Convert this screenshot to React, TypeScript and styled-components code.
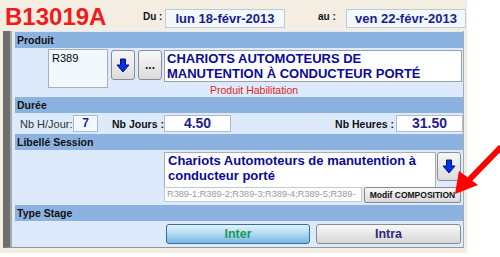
import React from "react";
import styled, { createGlobalStyle } from "styled-components";

const GlobalStyle = createGlobalStyle`
  body {
    margin: 0;
    background: #ffffff;
    font-family: "Liberation Sans", Arial, sans-serif;
  }
`;

const Wrapper = styled.div`
  position: relative;
  width: 500px;
  height: 257px;
`;
const Screen = styled.div`
  width: 467px;
  height: 253px;
  background: #f4eee2;
`;
const Header = styled.header`
  display: flex;
  align-items: flex-start;
  height: 31px;
  padding-left: 5px;
  box-sizing: border-box;
`;
const Code = styled.h1`
  margin: 5px 0 0 0;
  width: 138px;
  font-size: 24px;
  line-height: 24px;
  font-weight: bold;
  color: #f01c1c;
`;
const DateLabel = styled.span<{ $width: number }>`
  width: ${(p) => p.$width}px;
  margin-top: 11px;
  font-size: 10px;
  line-height: 12px;
  font-weight: bold;
  color: #101010;
`;
const DateBox = styled.div<{ $gap?: number }>`
  width: 120px;
  height: 19px;
  margin-top: 9px;
  margin-right: ${(p) => p.$gap || 0}px;
  box-sizing: border-box;
  border: 1px solid #c2c9d0;
  background: #f1f9ff;
  color: #1c1c8a;
  font-size: 13px;
  font-weight: bold;
  line-height: 17px;
  text-align: center;
`;
const Panel = styled.section`
  margin-left: 3px;
  width: 461px;
  height: 217px;
  box-sizing: border-box;
  padding: 1px 0 0 5px;
  background: #dceafb;
  border-left: 7px solid #6f6f6f;
  border-right: 1px solid #a4abb3;
  border-bottom: 1px solid #8f969e;
  box-shadow: inset 2px 0 0 #a9a9a9;
`;
const Bar = styled.div`
  height: 16px;
  padding-left: 2px;
  background: #8cb3e0;
  color: #111111;
  font-size: 10.5px;
  font-weight: bold;
  line-height: 16px;
`;
const ProduitRow = styled.div`
  display: flex;
  align-items: flex-start;
  height: 49px;
  padding: 1px 0 0 33px;
  box-sizing: border-box;
`;
const CodeInput = styled.div`
  width: 60px;
  height: 39px;
  margin-right: 3px;
  box-sizing: border-box;
  border: 1px solid #a8aeb4;
  background: #f1f9ff;
  padding: 2px 3px;
  font-size: 11px;
  color: #000000;
`;
const ToolButton = styled.button<{ $height: number; $gap: number }>`
  display: flex;
  align-items: center;
  justify-content: center;
  width: 24px;
  height: ${(p) => p.$height}px;
  margin: 1px ${(p) => p.$gap}px 0 0;
  padding: 0;
  box-sizing: border-box;
  border: 1px solid #8d8d8d;
  border-radius: 3px;
  background: linear-gradient(#f7f7f7, #dcdcdc);
  font-family: "Liberation Sans", Arial, sans-serif;
  font-size: 12px;
  font-weight: bold;
  color: #222222;
`;
const ProductColumn = styled.div`
  display: flex;
  flex-direction: column;
  margin-top: 1px;
`;
const ProductName = styled.div`
  width: 298px;
  height: 32px;
  box-sizing: border-box;
  border: 1px solid #9aa1a8;
  background: #ffffff;
  padding: 0 2px;
  color: #0a0a96;
  font-size: 13px;
  font-weight: bold;
  line-height: 15px;
`;
const Caption = styled.div`
  margin-top: 3px;
  padding-left: 46px;
  color: #e52424;
  font-size: 10.5px;
  line-height: 10px;
`;
const DureeRow = styled.div`
  display: flex;
  align-items: center;
  height: 21px;
  padding-left: 5px;
`;
const FieldLabel = styled.span<{ $bold?: boolean; $width?: number }>`
  width: ${(p) => (p.$width ? `${p.$width}px` : "auto")};
  color: ${(p) => (p.$bold ? "#111111" : "#333333")};
  font-size: ${(p) => (p.$bold ? 10.5 : 11)}px;
  font-weight: ${(p) => (p.$bold ? "bold" : "normal")};
`;
const NumberBox = styled.div<{ $width: number; $light?: boolean }>`
  width: ${(p) => p.$width}px;
  height: 17px;
  box-sizing: border-box;
  border: 1px solid #b4bac0;
  background: ${(p) => (p.$light ? "#f1f9ff" : "#ffffff")};
  color: #1e1e8c;
  font-size: ${(p) => (p.$light ? 12 : 14)}px;
  font-weight: bold;
  line-height: 15px;
  text-align: center;
`;
const Spacer = styled.div`
  flex: 1;
`;
const LibelleRow = styled.div`
  display: flex;
  align-items: flex-start;
  height: 55px;
  padding: 2px 0 0 149px;
  box-sizing: border-box;
`;
const LibelleColumn = styled.div`
  display: flex;
  flex-direction: column;
  width: 272px;
`;
const LibelleText = styled.div`
  height: 35px;
  box-sizing: border-box;
  border: 1px solid #a8aeb4;
  border-bottom: none;
  background: #ffffff;
  padding: 0 3px;
  color: #0a0a96;
  font-size: 13px;
  font-weight: bold;
  line-height: 15px;
`;
const CompoRow = styled.div`
  display: flex;
  align-items: flex-start;
  width: 300px;
`;
const CompoField = styled.div`
  width: 198px;
  height: 15px;
  box-sizing: border-box;
  border: 1px solid #c4c9ce;
  background: #ffffff;
  padding-left: 2px;
  color: #9a9a9a;
  font-size: 9.2px;
  line-height: 13px;
  white-space: nowrap;
  overflow: hidden;
`;
const ModifButton = styled.button`
  width: 97px;
  height: 16px;
  margin-left: 2px;
  padding: 0;
  box-sizing: border-box;
  border: 1px solid #8a8a8a;
  border-radius: 2px;
  background: linear-gradient(#f7f7f7, #d9d9d9);
  font-family: "Liberation Sans", Arial, sans-serif;
  font-size: 8.5px;
  font-weight: bold;
  color: #111111;
`;
const SideButton = styled(ToolButton)`
  margin: 0 0 0 1px;
`;
const StageRow = styled.div`
  display: flex;
  gap: 6px;
  padding: 3px 0 0 151px;
`;
const StageButton = styled.button<{ $active?: boolean }>`
  width: ${(p) => (p.$active ? 144 : 145)}px;
  height: 20px;
  padding: 0;
  box-sizing: border-box;
  border: 1px solid ${(p) => (p.$active ? "#3b6e96" : "#8a8a8a")};
  border-radius: 3px;
  background: ${(p) =>
    p.$active ? "linear-gradient(#e3f3fc, #a9d6f0 55%, #74b9e0)" : "linear-gradient(#f8f8f8, #d6d6d6)"};
  font-family: "Liberation Sans", Arial, sans-serif;
  font-size: 12.5px;
  font-weight: bold;
  color: ${(p) => (p.$active ? "#1c9a5c" : "#2a2a86")};
`;
const Pointer = styled.svg`
  position: absolute;
  left: 445px;
  top: 140px;
`;

function DownArrow() {
  return (
    <svg width="14" height="15" viewBox="0 0 14 15">
      <polygon points="4.5,1 9.5,1 9.5,7 13,7 7,14 1,7 4.5,7" fill="#0030f0" stroke="#001470" strokeWidth="1" />
    </svg>
  );
}

function App() {
  return (
    <Wrapper>
      <GlobalStyle />
      <Screen>
        <Header>
          <Code>B13019A</Code>
          <DateLabel $width={22}>Du :</DateLabel>
          <DateBox $gap={33}>lun 18-févr-2013</DateBox>
          <DateLabel $width={28}>au :</DateLabel>
          <DateBox>ven 22-févr-2013</DateBox>
        </Header>
        <Panel>
          <Bar>Produit</Bar>
          <ProduitRow>
            <CodeInput>R389</CodeInput>
            <ToolButton $height={30} $gap={3}>
              <DownArrow />
            </ToolButton>
            <ToolButton $height={30} $gap={2}>
              ...
            </ToolButton>
            <ProductColumn>
              <ProductName>
                CHARIOTS AUTOMOTEURS DE
                <br />
                MANUTENTION À CONDUCTEUR PORTÉ
              </ProductName>
              <Caption>Produit Habilitation</Caption>
            </ProductColumn>
          </ProduitRow>
          <Bar>Durée</Bar>
          <DureeRow>
            <FieldLabel $width={53}>Nb H/Jour:</FieldLabel>
            <NumberBox $width={25} $light>
              7
            </NumberBox>
            <FieldLabel $bold $width={52} style={{ marginLeft: 14 }}>
              Nb Jours :
            </FieldLabel>
            <NumberBox $width={67}>4.50</NumberBox>
            <Spacer />
            <FieldLabel $bold style={{ marginRight: 2 }}>
              Nb Heures :
            </FieldLabel>
            <NumberBox $width={67}>31.50</NumberBox>
          </DureeRow>
          <Bar>Libellé Session</Bar>
          <LibelleRow>
            <LibelleColumn>
              <LibelleText>
                Chariots Automoteurs de manutention à
                <br />
                conducteur porté
              </LibelleText>
              <CompoRow>
                <CompoField>R389-1;R389-2;R389-3;R389-4;R389-5;R389-</CompoField>
                <ModifButton>Modif COMPOSITION</ModifButton>
              </CompoRow>
            </LibelleColumn>
            <SideButton $height={29} $gap={0}>
              <DownArrow />
            </SideButton>
          </LibelleRow>
          <Bar>Type Stage</Bar>
          <StageRow>
            <StageButton $active>Inter</StageButton>
            <StageButton>Intra</StageButton>
          </StageRow>
        </Panel>
      </Screen>
      <Pointer width="55" height="60" viewBox="0 0 55 60">
        <line x1="56" y1="7" x2="24" y2="40" stroke="#ff0000" strokeWidth="6" />
        <polygon points="10,54 14,31 33,45" fill="#ff0000" />
      </Pointer>
    </Wrapper>
  );
}

export default App;
